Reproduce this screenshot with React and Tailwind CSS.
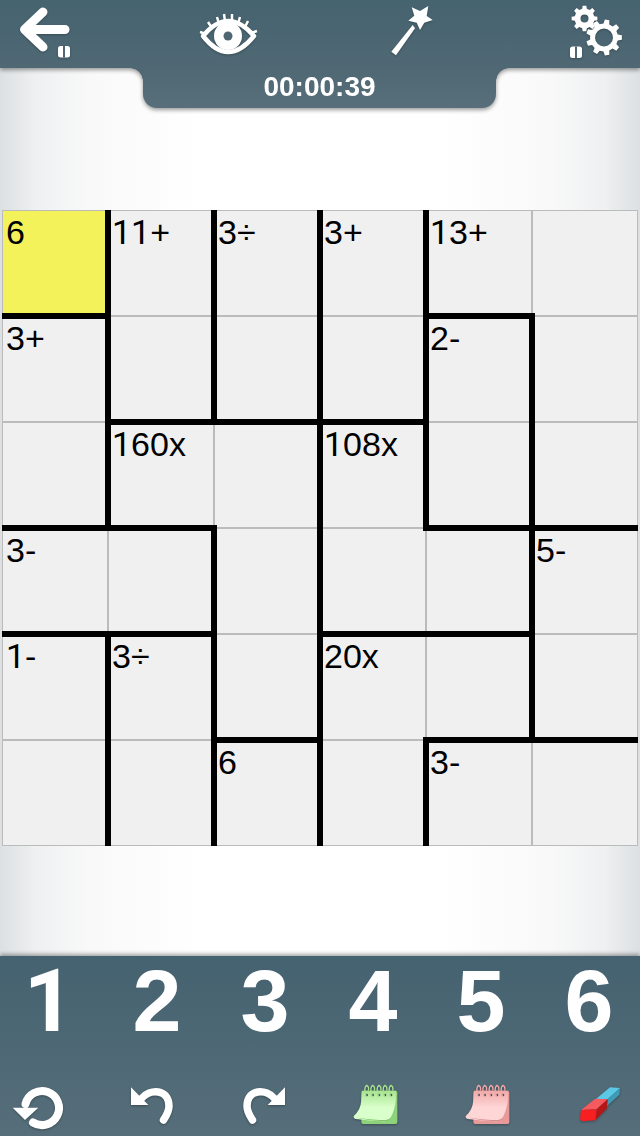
const font = { fontFamily: '"Liberation Sans", Arial, sans-serif' };

const cells = [
  ['6', '11+', '3÷', '3+', '13+', ''],
  ['3+', '', '', '', '2-', ''],
  ['', '160x', '', '108x', '', ''],
  ['3-', '', '', '', '', '5-'],
  ['1-', '3÷', '', '20x', '', ''],
  ['', '', '6', '', '3-', ''],
];

// thick walls, "row-col" of the cell left of / above the wall
const rightWalls = new Set([
  '0-0', '1-0', '2-0', '4-0', '5-0',
  '0-1', '1-1', '3-1', '4-1', '5-1',
  '0-2', '1-2', '2-2', '3-2', '4-2', '5-2',
  '0-3', '1-3', '2-3', '5-3',
  '1-4', '2-4', '3-4', '4-4',
]);
const bottomWalls = new Set([
  '0-0', '0-4',
  '1-1', '1-2', '1-3',
  '2-0', '2-1', '2-4', '2-5',
  '3-0', '3-1', '3-3', '3-4',
  '4-2', '4-4', '4-5',
]);

function gearPath(cx, cy, rOut, rIn, hole, teeth) {
  const pts = [];
  const step = (Math.PI * 2) / teeth;
  for (let i = 0; i < teeth; i++) {
    const a = i * step;
    const p = (r, d) => `${(cx + r * Math.cos(a + d * step)).toFixed(2)} ${(cy + r * Math.sin(a + d * step)).toFixed(2)}`;
    pts.push(p(rIn, -0.3), p(rOut, -0.18), p(rOut, 0.18), p(rIn, 0.3));
  }
  return `M${pts.join('L')}Z M${cx + hole} ${cy} A${hole} ${hole} 0 1 0 ${cx - hole} ${cy} A${hole} ${hole} 0 1 0 ${cx + hole} ${cy}Z`;
}

function Pause({ x, y, fill = '#4e6773' }) {
  return (
    <g>
      <rect x={x} y={y} width="12" height="11.5" rx="2.5" fill="#fff" />
      <rect x={x + 5} y={y} width="2" height="11.5" fill={fill} />
    </g>
  );
}

const iconClass = 'w-[80px] h-[68px] drop-shadow-[0_1px_1px_rgba(0,0,0,0.25)]';

function BackIcon() {
  return (
    <svg viewBox="4 0 80 68" className={iconClass}>
      <path d="M43 12 L24.500 29.500 L43 47 M25 29.500 H65" fill="none" stroke="#fff" strokeWidth="9" strokeLinecap="round" strokeLinejoin="round" />
      <Pause x={58} y={46} />
    </svg>
  );
}

function EyeIcon() {
  const lashes = [
    [200, 32, 206, 34], [208, 22, 212, 28], [217, 17, 219, 24], [224, 14, 225, 21],
    [232, 14, 232, 21], [240, 17, 238, 24], [248, 21, 245, 27], [257, 31, 251, 33],
  ];
  return (
    <svg viewBox="188 0 80 68" className={iconClass}>
      <path d="M203 36 Q228 6 254 36 Q228 68 203 36Z" fill="none" stroke="#fff" strokeWidth="4.500" strokeLinejoin="round" />
      <circle cx="228" cy="36" r="14" fill="#fff" />
      <circle cx="228" cy="36" r="4.500" fill="#4e6773" />
      {lashes.map((l, i) => (
        <line key={i} x1={l[0]} y1={l[1]} x2={l[2]} y2={l[3]} stroke="#fff" strokeWidth="2.500" />
      ))}
    </svg>
  );
}

function WandIcon() {
  return (
    <svg viewBox="372 0 80 68" className={iconClass}>
      <polygon fill="#fff" points="411.700,7.300 420,11 428.300,6 426.700,16 432.700,20 424.300,22.700 420,30 416.700,22.700 408.300,20.700 414.300,15.700" />
      <polygon fill="#fff" points="391.300,51.700 396,55.300 415,28.300 412.700,25" />
    </svg>
  );
}

function GearsIcon() {
  return (
    <svg viewBox="556 0 80 68" className={iconClass}>
      <path d={gearPath(604, 37.5, 18, 14, 9, 9)} fill="#fff" fillRule="evenodd" />
      <path d={gearPath(584.5, 18.5, 13, 10, 4, 8)} fill="#fff" fillRule="evenodd" />
      <Pause x={570} y={46.500} />
    </svg>
  );
}

const toolClass = 'w-[72px] h-[76px] drop-shadow-[0_1px_1px_rgba(0,0,0,0.3)]';

function ReloadIcon() {
  return (
    <svg viewBox="10 1060 72 76" className={toolClass}>
      <path d="M33 1122.500 A17 17 0 1 0 25.500 1104" fill="none" stroke="#fff" strokeWidth="8" strokeLinecap="round" />
      <polygon fill="#fff" points="12.700,1107.700 38.300,1107.700 25,1120" />
    </svg>
  );
}

function UndoIcon() {
  return (
    <svg viewBox="118 1060 72 76" className={toolClass}>
      <path d="M141 1099 C150 1088 169 1089 169 1106 C169 1112 166 1116 163.500 1120" fill="none" stroke="#fff" strokeWidth="7.500" strokeLinecap="round" />
      <polygon fill="#fff" points="131,1087.300 131,1105 148.300,1105" />
    </svg>
  );
}

function RedoIcon() {
  return (
    <svg viewBox="226 1060 72 76" className={toolClass}>
      <g transform="translate(416 0) scale(-1 1)">
        <path d="M141 1099 C150 1088 169 1089 169 1106 C169 1112 166 1116 163.500 1120" fill="none" stroke="#fff" strokeWidth="7.500" strokeLinecap="round" />
        <polygon fill="#fff" points="131,1087.300 131,1105 148.300,1105" />
      </g>
    </svg>
  );
}

function NoteIcon({ id, left, back, shade, top, bottom }) {
  return (
    <svg viewBox={`${left} 0 216 228`} className={toolClass}>
      <defs>
        <linearGradient id={id} x1="0" y1="0" x2="0" y2="1">
          <stop offset="0" stopColor={top} />
          <stop offset="0.55" stopColor={bottom} />
          <stop offset="1" stopColor={bottom} />
        </linearGradient>
      </defs>
      <rect x="124" y="92" width="108" height="100" rx="6" fill={back} />
      <path d="M126 92 H228 Q230 130 218 160 Q210 186 190 184 Q150 182 108 177 Q98 174 102 167 Q122 150 124 120Z" fill={`url(#${id})`} />
      <path d="M124 176 Q160 182 195 184 Q212 184 220 160 Q214 178 198 180 Q160 180 110 173Z" fill={shade} />
      {[140, 158, 177, 195, 213].map((x) => (
        <g key={x}>
          <circle cx={x} cy="105" r="4" fill="#3f5560" />
          <path d={`M${x - 2} 108 Q${x - 10} 82 ${x} 76 Q${x + 8} 80 ${x + 5} 92`} fill="none" stroke={top} strokeWidth="4" />
        </g>
      ))}
    </svg>
  );
}

function EraserIcon() {
  return (
    <svg viewBox="690 0 216 228" className={toolClass}>
      <polygon fill="#5cc8e8" points="828,117 870,82 900,84 863,118" />
      <polygon fill="#3f9cb8" points="863,118 900,84 898,104 861,138" />
      <polygon fill="#f65a5e" points="783,150 826,116 863,118 830,148" />
      <polygon fill="#b51616" points="830,148 863,118 860,146 826,180" />
      <polygon fill="#f71f22" points="783,150 830,148 826,181 785,184 780,176" />
    </svg>
  );
}

// Liberation's 1 has a foot, the picture's has none
function Label({ text }) {
  return [...text].map((ch, i) => (
    ch === '1' ? <span key={i} className="[font-family:Roboto]">1</span> : ch
  ));
}

function Cell({ label, r, c }) {
  const key = `${r}-${c}`;
  return (
    <div className={`relative h-[106px] border border-[#bbbbbb] pl-[3px] pt-[2px] text-[34px] leading-[38px] text-black ${r === 0 && c === 0 ? 'bg-[#f3f25a]' : 'bg-[#f0f0f0]'}`}>
      <Label text={label} />
      {rightWalls.has(key) && (
        <span className={`absolute right-[-4px] w-[6px] bg-black z-10 ${r === 0 ? 'top-[-1px]' : 'top-[-4px]'} ${r === 5 ? 'bottom-[-1px]' : 'bottom-[-4px]'}`} />
      )}
      {bottomWalls.has(key) && (
        <span className={`absolute bottom-[-4px] h-[6px] bg-black z-10 ${c === 0 ? 'left-[-1px]' : 'left-[-4px]'} ${c === 5 ? 'right-[-1px]' : 'right-[-4px]'}`} />
      )}
    </div>
  );
}

export default function App() {
  return (
    <div
      style={font}
      className="w-[640px] h-[1136px] overflow-hidden flex flex-col bg-[linear-gradient(90deg,#dce0e2_0px,#eef0f1_35px,#f9f9f9_90px,#ffffff_200px,#ffffff_440px,#f9f9f9_550px,#eef0f1_605px,#dce0e2_640px)]"
    >
      <div className="drop-shadow-[0_2px_2px_rgba(0,0,0,0.4)]">
        <div className="h-[68px] px-[4px] flex justify-between bg-[linear-gradient(180deg,#466370,#4f6874)]">
          <BackIcon />
          <EyeIcon />
          <WandIcon />
          <GearsIcon />
        </div>
        <div className="relative ml-[143px] w-[353px] h-[40px] rounded-b-[14px] flex items-center justify-center pb-[2px] text-[28px] font-bold text-white bg-[linear-gradient(180deg,#4f6874,#586f7b)]">
          00:00:39
          <span className="absolute top-0 left-[-13px] w-[13px] h-[13px] bg-[radial-gradient(circle_at_0_100%,transparent_12.5px,#4f6874_13px)]" />
          <span className="absolute top-0 right-[-13px] w-[13px] h-[13px] bg-[radial-gradient(circle_at_100%_100%,transparent_12.5px,#4f6874_13px)]" />
        </div>
      </div>

      <div className="mt-[102px] ml-[2px] w-[636px] grid grid-cols-6">
        {cells.map((row, r) => row.map((label, c) => <Cell key={`${r}-${c}`} label={label} r={r} c={c} />))}
      </div>

      <div className="mt-auto h-[180px] flex flex-col bg-[linear-gradient(180deg,#456270,#566e7a)] shadow-[0_-2px_4px_rgba(0,0,0,0.35)]">
        <div className="pt-[1px] pl-[13px] pr-[7px] flex gap-[36px]">
          {[1, 2, 3, 4, 5, 6].map((n) => (
            <div key={n} className={`w-[72px] text-center text-[88px] leading-[88px] font-bold text-white ${n === 1 ? '[font-family:Roboto]' : ''}`}>{n}</div>
          ))}
        </div>
        <div className="mt-[15px] px-[10px] flex gap-[36px]">
          <ReloadIcon />
          <UndoIcon />
          <RedoIcon />
          <NoteIcon id="noteGreen" left={42} back="#8fd27c" shade="#7cc46a" top="#a8e490" bottom="#d9ffca" />
          <NoteIcon id="notePink" left={30} back="#e89a9a" shade="#d88a8a" top="#f2a8a8" bottom="#ffd6d6" />
          <EraserIcon />
        </div>
      </div>
    </div>
  );
}
